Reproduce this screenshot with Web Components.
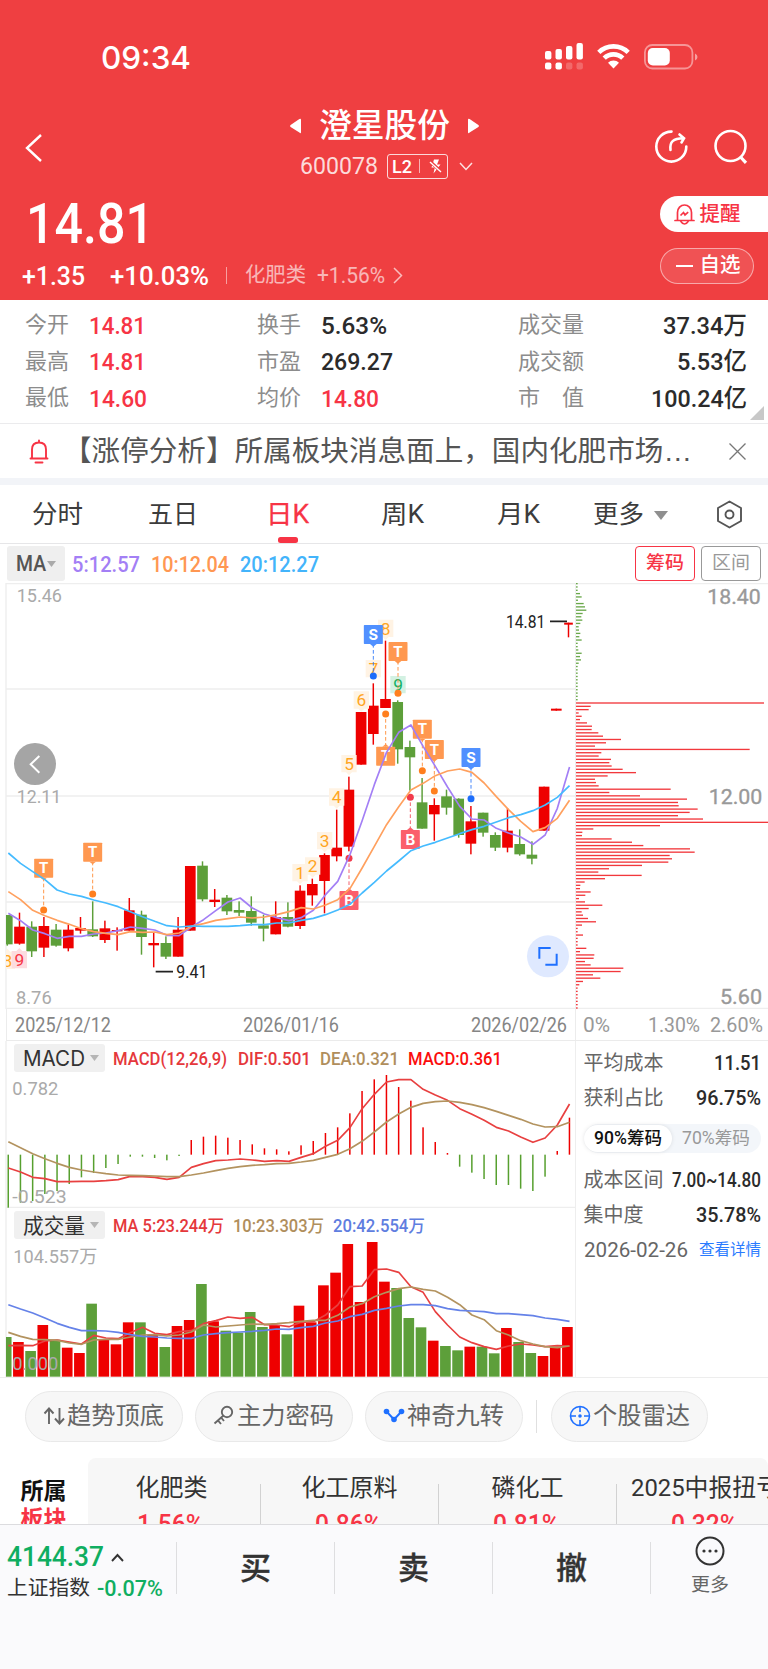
<!DOCTYPE html>
<html lang="zh-CN">
<head>
<meta charset="utf-8">
<title>澄星股份 600078</title>
<style>
    html, body { margin: 0; padding: 0; }
    body {
        width: 768px;
        height: 1669px;
        overflow: hidden;
        background: #fff;
        color: #333;
        font-family: Roboto, "Noto Sans CJK SC", sans-serif;
    }
</style>
</head>
<body>
<stock-app></stock-app>

<script>
const RED = '#ee0000';
const GREEN = '#5d9f3a';

// Text squeezed or stretched to a given width
class FitText extends HTMLElement {
    constructor() {
        super();
        this.attachShadow({ mode: 'open' });
        this.shadowRoot.innerHTML = `
            <style>
                :host { display: inline-block; flex: none; line-height: 1; height: 1em; white-space: nowrap; }
                span { display: inline-block; transform-origin: 0 0; }
            </style>
            <span><slot></slot></span>
        `;
    }

    connectedCallback() {
        const w = Number(this.getAttribute('w'));
        const span = this.shadowRoot.querySelector('span');
        this.style.width = w + 'px';
        const natural = span.getBoundingClientRect().width;
        if (natural > 0) span.style.transform = `scaleX(${w / natural})`;
    }
}
customElements.define('fit-text', FitText);

class StatusBar extends HTMLElement {
    constructor() {
        super();
        this.attachShadow({ mode: 'open' });
        this.shadowRoot.innerHTML = `
            <style>
                :host { display: flex; justify-content: space-between; box-sizing: border-box; height: 100px; padding: 42px 69px 0 101px; color: #fff; }
                fit-text { font: 500 31.5px/1 Inter, sans-serif; }
                .icons { display: flex; gap: 13px; }
            </style>
            <fit-text w="90">09:34</fit-text>
            <div class="icons">
                <svg width="39" height="28" viewBox="0 0 39 28" fill="#fff">
                    <rect x="0" y="9" width="6.4" height="8.5" rx="2"/>
                    <rect x="10.5" y="7" width="6.4" height="10.500" rx="2"/>
                    <rect x="21" y="4" width="6.4" height="13.5" rx="2"/>
                    <rect x="31.5" y="1" width="6.4" height="16.5" rx="2"/>
                    <rect x="0" y="20.5" width="6.4" height="7" rx="2"/>
                    <rect x="10.5" y="20.5" width="6.4" height="7" rx="2"/>
                    <rect x="21" y="20.5" width="6.4" height="7" rx="2" opacity=".22"/>
                    <rect x="31.5" y="20.5" width="6.4" height="7" rx="2" opacity=".22"/>
                </svg>
                <svg width="33" height="28" viewBox="0 0 33 28" fill="none" stroke="#fff" stroke-width="4.6">
                    <path d="M1.8 10.4A21 21 0 0 1 31.2 10.4"/>
                    <path d="M7.2 16.2A13.2 13.2 0 0 1 25.8 16.2"/>
                    <path d="M16.5 26.5L11 20.8A8 8 0 0 1 22 20.8Z" fill="#fff" stroke="none"/>
                </svg>
                <svg width="56" height="28" viewBox="0 0 56 28">
                    <rect x="1.9" y="3" width="47.5" height="23.5" rx="7.5" fill="none" stroke="#fff" stroke-opacity=".45" stroke-width="1.8"/>
                    <rect x="4.8" y="6" width="22" height="17.4" rx="5" fill="#fff"/>
                    <path d="M52 11.5q2.5 1 2.500 3.500t-2.500 3.500z" fill="#fff" opacity=".5"/>
                </svg>
            </div>
        `;
    }
}
customElements.define('status-bar', StatusBar);

class StockTitle extends HTMLElement {
    constructor() {
        super();
        this.attachShadow({ mode: 'open' });
        this.shadowRoot.innerHTML = `
            <style>
                :host { display: grid; grid-template-columns: 240px 1fr 240px; height: 93px; color: #fff; }
                .back { padding: 34px 0 0 25px; }
                .mid { display: flex; flex-direction: column; align-items: center; }
                .name { display: flex; align-items: center; gap: 18px; margin-top: 10px; height: 32px; }
                .name fit-text { font-size: 32.5px; font-weight: 500; }
                .sub { display: flex; align-items: center; margin: 11px 0 0 4px; height: 26px; }
                .code { font-size: 24px; color: rgba(255,255,255,.82); }
                .badge { display: flex; align-items: center; box-sizing: border-box; width: 61px; height: 25px; margin: 0 11px 0 9px; padding: 0 4px; border: 1.4px solid rgba(255,255,255,.8); border-radius: 3px; }
                .badge fit-text { font-size: 19px; font-weight: 500; }
                .badge i { width: 1px; height: 14px; margin: 0 9px 0 7px; background: rgba(255,255,255,.6); }
                .tools { display: flex; justify-content: flex-end; gap: 25px; padding: 29px 20.500px 0 0; }
            </style>
            <div class="back">
                <svg width="18" height="28" viewBox="0 0 18 28" fill="none" stroke="#fff" stroke-width="2.4"><path d="M16 1L2 14L16 27"/></svg>
            </div>
            <div class="mid">
                <div class="name">
                    <svg width="11" height="16" viewBox="0 0 11 16" fill="#fff"><path d="M11 2v12q0 2-1.600.6L.6 9Q-.4 8 .6 7L9.400 1Q11 0 11 2z"/></svg>
                    <fit-text w="131">澄星股份</fit-text>
                    <svg width="11" height="16" viewBox="0 0 11 16" fill="#fff"><path d="M0 2v12q0 2 1.600.6L10.400 9Q11.400 8 10.400 7L1.600 1Q0 0 0 2z"/></svg>
                </div>
                <div class="sub">
                    <fit-text class="code" w="78">600078</fit-text>
                    <div class="badge">
                        <fit-text w="20">L2</fit-text><i></i>
                        <svg width="13" height="15" viewBox="0 0 13 15"><path d="M5 .5H10L8 5.500H11.500L4.500 14.500L5.800 8.500H2.500z" fill="#fff"/><path d="M1 2.500l11 10" stroke="#ef3f41" stroke-width="3.200"/><path d="M1 3l11 10" stroke="#fff" stroke-width="1.400"/></svg>
                    </div>
                    <svg width="14" height="9" viewBox="0 0 14 9" fill="none" stroke="#fff" stroke-opacity=".85" stroke-width="1.500"><path d="M1 1l6 6.500L13 1"/></svg>
                </div>
            </div>
            <div class="tools">
                <svg width="35" height="35" viewBox="0 0 35 35" fill="none" stroke="#fff" stroke-width="2.600">
                    <path d="M17.500 2.600A15 15 0 1 0 32.300 17.500" stroke-linecap="round"/>
                    <path d="M16.500 21C15.500 13 19 9.300 29.500 9.300M25.500 5.500L30 9.300L27.500 13.500" stroke-linecap="round"/>
                </svg>
                <svg width="34" height="35" viewBox="0 0 34 35" fill="none" stroke="#fff" stroke-width="2.600">
                    <circle cx="16.500" cy="17" r="15"/><path d="M26.500 28L32 33.800" stroke-width="3.200"/>
                </svg>
            </div>
        `;
    }
}
customElements.define('stock-title', StockTitle);

class PriceHead extends HTMLElement {
    constructor() {
        super();
        this.attachShadow({ mode: 'open' });
        this.shadowRoot.innerHTML = `
            <style>
                :host { display: flex; justify-content: space-between; height: 107px; color: #fff; }
                .price { display: block; margin: 3px 0 0 25.500px; font-size: 56px; font-weight: 500; }
                .line { display: flex; align-items: center; height: 28px; margin: 9.500px 0 0 21.500px; font-size: 26px; font-weight: 500; }
                .line i { width: 1px; height: 17px; margin: 0 18px 0 17px; background: rgba(255,255,255,.5); }
                .sector { font-size: 20.5px; font-weight: 400; opacity: .62; }
                .sector + .sector { margin: 0 8px 0 11px; font-size: 22px; }
                .side { width: 108.500px; padding-top: 3px; }
                .pill { display: flex; align-items: center; box-sizing: border-box; height: 36px; font-size: 20.5px; font-weight: 500; }
                .remind { padding-left: 14px; gap: 5px; border-radius: 18px 0 0 18px; background: #fff; color: #f73445; }
                .fav { width: 94px; margin-top: 15.500px; padding-left: 15px; gap: 7px; border: 1px solid rgba(255,255,255,.5); border-radius: 18px; background: rgba(255,255,255,.1); }
                .fav i { width: 17px; height: 2px; background: #fff; }
            </style>
            <div>
                <fit-text class="price" w="128">14.81</fit-text>
                <div class="line">
                    <fit-text w="63">+1.35</fit-text>
                    <fit-text w="99" style="margin-left:25px">+10.03%</fit-text>
                    <i></i>
                    <fit-text class="sector" w="61">化肥类</fit-text>
                    <fit-text class="sector" w="68">+1.56%</fit-text>
                    <svg width="10" height="17" viewBox="0 0 10 17" fill="none" stroke="#fff" stroke-opacity=".65" stroke-width="1.500"><path d="M1 1l7.500 7.500L1 16"/></svg>
                </div>
            </div>
            <div class="side">
                <div class="pill remind">
                    <svg width="21" height="21" viewBox="0 0 21 21" fill="none" stroke="#f73445" stroke-width="1.700">
                        <path d="M1 16.500h19M3.500 16.500V8.500a7 7.500 0 0 1 14 0v8" stroke-linecap="round"/>
                        <path d="M6.500 17q4 6 8 0"/>
                        <path d="M6.500 11.500l3-3 1.500 2.500 3.200-2.800"/>
                    </svg>
                    <fit-text w="41">提醒</fit-text>
                </div>
                <div class="pill fav"><i></i><fit-text w="41">自选</fit-text></div>
            </div>
        `;
    }
}
customElements.define('price-head', PriceHead);

class StatItem extends HTMLElement {
    constructor() {
        super();
        this.attachShadow({ mode: 'open' });
    }

    connectedCallback() {
        const label = this.getAttribute('label');
        this.shadowRoot.innerHTML = `
            <style>
                :host { display: flex; align-items: center; height: 36.700px; }
                .label { display: flex; justify-content: space-between; margin-right: 19.500px; color: #8c8c8c; font-size: 22px; line-height: 1; padding-bottom: 1px; }
                :host([wide]) { justify-content: space-between; }
                :host([wide]) .label { width: 66px; margin: 0; }
                fit-text { margin-top: 1px; font-size: 24.500px; font-weight: 500; color: #2b2b2b; }
                :host([up]) fit-text { color: #f73445; }
            </style>
            <div class="label">${label.split(' ').map(t => `<span>${t}</span>`).join('')}</div>
            <fit-text w="${this.getAttribute('w')}">${this.getAttribute('value')}</fit-text>
        `;
    }
}
customElements.define('stat-item', StatItem);

class StatGrid extends HTMLElement {
    constructor() {
        super();
        this.attachShadow({ mode: 'open' });
        this.shadowRoot.innerHTML = `
            <style>
                :host { display: grid; position: relative; grid-template-columns: 232px 261px 229px; box-sizing: border-box; height: 124px; padding: 7px 0 0 25px; border-bottom: 1.500px solid #ebebed; align-content: start; }
                .corner { position: absolute; right: 4px; bottom: 3px; }
            </style>
            <stat-item label="今开" value="14.81" w="57" up></stat-item>
            <stat-item label="换手" value="5.63%" w="66"></stat-item>
            <stat-item label="成交量" value="37.34万" w="84" wide></stat-item>
            <stat-item label="最高" value="14.81" w="57" up></stat-item>
            <stat-item label="市盈" value="269.27" w="72"></stat-item>
            <stat-item label="成交额" value="5.53亿" w="70" wide></stat-item>
            <stat-item label="最低" value="14.60" w="58" up></stat-item>
            <stat-item label="均价" value="14.80" w="58" up></stat-item>
            <stat-item label="市 值" value="100.24亿" w="96" wide></stat-item>
            <svg class="corner" width="14" height="14" fill="#c8c8c8"><path d="M14 0V14H0z"/></svg>
        `;
    }
}
customElements.define('stat-grid', StatGrid);

class NoticeBar extends HTMLElement {
    constructor() {
        super();
        this.attachShadow({ mode: 'open' });
        this.shadowRoot.innerHTML = `
            <style>
                :host { display: flex; align-items: center; box-sizing: border-box; height: 61px; padding: 0 22px 0 29px; border-bottom: 7px solid #f2f4f8; color: #555; }
                fit-text { margin: 1px auto 0 13.500px; font-size: 28.500px; font-family: "Liberation Sans", "Noto Sans CJK SC", sans-serif; }
            </style>
            <svg width="20" height="25" viewBox="0 0 20 25" fill="none" stroke="#f73445" stroke-width="1.900" stroke-linecap="round">
                <path d="M1.500 19.500H18.500M3 19V10.500Q3 3.500 10 3.500T17 10.500V19M10 1.500V3M6.500 23.500H13.500"/>
            </svg>
            <fit-text w="629"><slot></slot></fit-text>
            <svg width="17" height="17" viewBox="0 0 17 17" stroke="#777" stroke-width="1.300"><path d="M.5 .5l16 16M16.500.5l-16 16"/></svg>
        `;
    }
}
customElements.define('notice-bar', NoticeBar);

class PeriodTabs extends HTMLElement {
    constructor() {
        super();
        this.attachShadow({ mode: 'open' });
        this.shadowRoot.innerHTML = `
            <style>
                :host { display: grid; grid-template-columns: repeat(5, 115px) 128px 65px; box-sizing: border-box; height: 59px; border-bottom: 1.500px solid #e6e6e8; color: #3c3c3c; font-size: 25.500px; }
                div { display: flex; flex-direction: column; align-items: center; padding-top: 17px; }
                div i { width: 20px; height: 5.500px; margin-top: 9.500px; border-radius: 2.500px; background: #f73445; }
                .on { color: #f73445; -webkit-text-stroke: .3px #f73445; }
                .more { flex-direction: row; align-items: flex-start; gap: 10px; padding-left: 18px; }
                .more svg { margin-top: 9px; }
                .set { padding: 14.500px 0 0 13px; align-items: flex-start; }
            </style>
            <div><fit-text w="51">分时</fit-text></div>
            <div><fit-text w="50">五日</fit-text></div>
            <div class="on"><fit-text w="43">日K</fit-text><i></i></div>
            <div><fit-text w="43">周K</fit-text></div>
            <div style="padding-left:2px"><fit-text w="43">月K</fit-text></div>
            <div class="more"><fit-text w="51">更多</fit-text><svg width="14" height="9" fill="#8f8f8f"><path d="M0 0H14L7 9z"/></svg></div>
            <div class="set">
                <svg width="27" height="29" viewBox="0 0 27 29" fill="none" stroke="#555" stroke-width="1.900" stroke-linejoin="round">
                    <path d="M13.500 1.500L25 8V21L13.500 27.500L2 21V8z"/><circle cx="13.500" cy="14.500" r="4"/>
                </svg>
            </div>
        `;
    }
}
customElements.define('period-tabs', PeriodTabs);

class MaRow extends HTMLElement {
    constructor() {
        super();
        this.attachShadow({ mode: 'open' });
        this.shadowRoot.innerHTML = `
            <style>
                :host { display: flex; align-items: flex-start; box-sizing: border-box; height: 39px; padding: 2px 7px 0 7px; font-size: 21.500px; font-weight: 500; }
                .sel { display: flex; align-items: center; gap: 1px; box-sizing: border-box; width: 58px; height: 35px; padding-left: 9px; margin-right: 7px; background: #efefef; border-radius: 3px; color: #555; }
                .v { margin: 7.500px 11px 0 0; }
                .btn { display: flex; align-items: center; justify-content: center; box-sizing: border-box; width: 60px; height: 35px; border: 1.500px solid; border-radius: 4px; font-size: 18.500px; }
            </style>
            <div class="sel"><fit-text w="30">MA</fit-text><svg width="9" height="6" fill="#aaa"><path d="M0 0H9L4.500 6z"/></svg></div>
            <fit-text class="v" w="68" style="color:#a37ff5">5:12.57</fit-text>
            <fit-text class="v" w="78" style="color:#ff9752">10:12.04</fit-text>
            <fit-text class="v" w="79" style="color:#43b4fb">20:12.27</fit-text>
            <div class="btn" style="color:#f73445;margin-left:auto;margin-right:6px"><fit-text w="38">筹码</fit-text></div>
            <div class="btn" style="color:#999;font-weight:400"><fit-text w="38">区间</fit-text></div>
        `;
    }
}
customElements.define('ma-row', MaRow);

// All charts below draw in thirds of a pixel; one trading day is 36.6 units wide
const DAY = 36.6;
const line = (ys, color) => `<polyline fill="none" stroke="${color}" stroke-width="5" stroke-linejoin="round" points="${ys.map((y, i) => (25 + i * DAY).toFixed(1) + ',' + y).join(' ')}"/>`;
const label = (x, y, w, size, text, color) => `<text x="${x}" y="${y}" textLength="${w}" lengthAdjust="spacingAndGlyphs" font-size="${size}" fill="${color}">${text}</text>`;

// [color, body top, body bottom, high, low]
const CANDLES = [
    ['g',1036,1124,1036,1128],['r',1071,1122,1029,1125],['g',1071,1145,1055,1162],['r',1069,1134,1042,1162],
    ['g',1080,1128,1063,1131],['r',1080,1136,1066,1145],['r',1075,1083,1042,1092],['g',1079,1100,995,1102],
    ['r',1076,1111,1053,1120],['r',1081,1085,1073,1143],['r',1022,1083,985,1083],['g',1035,1102,1023,1155],
    ['r',1120,1127,1088,1193],['g',1120,1161,1100,1168],['r',1080,1161,1042,1161],['r',889,1083,889,1083],
    ['g',888,989,875,995],['r',990,997,958,1012],['g',984,1025,976,1036],['g',1021,1029,995,1039],
    ['g',1024,1059,980,1068],['g',1067,1077,1035,1115],['r',1042,1094,995,1094],['g',1042,1071,998,1073],
    ['r',963,1069,947,1078],['r',943,977,927,1008],['r',856,934,851,1031],['r',834,860,720,875],
    ['r',660,831,621,845],['r',427,585,427,585],['r',408,493,341,525],['r',388,415,213,415],
    ['g',397,539,392,582],['g',532,563,513,663],['g',698,777,625,777],['r',706,734,686,813],
    ['g',680,714,660,735],['g',687,796,686,804],['r',755,822,709,854],['g',729,789,729,801],
    ['g',796,834,788,844],['r',783,834,716,848],['g',823,854,779,858],['g',855,867,815,884],
    ['r',651,783,651,783],['r',417,423,417,423],['r',159,165,159,203]
];
const MA5 = [1031,1053,1081,1092,1106,1100,1100,1093,1090,1083,1072,1076,1081,1097,1098,1072,1050,1023,997,985,1015,1033,1044,1053,1044,1022,975,935,855,753,645,548,488,466,530,590,652,710,748,751,776,790,802,824,796,716,592];
const MA10 = [966,990,1022,1038,1052,1064,1077,1086,1091,1095,1086,1088,1087,1095,1090,1070,1062,1052,1047,1042,1045,1042,1035,1026,1014,1018,1006,990,957,895,830,765,711,661,641,618,604,598,608,640,681,720,755,786,774,746,692];
const MA20 = [850,881,906,930,961,973,980,991,1000,1011,1026,1041,1055,1068,1072,1069,1070,1070,1070,1068,1065,1065,1060,1060,1052,1046,1035,1021,1004,970,938,904,874,843,829,818,805,792,780,770,757,744,735,723,706,683,648];

// nine-turn counters: [x, middle, digit, fill, background, tip: 1 down / -1 up]
const TURNS = [
    [22,1172,8,'#ffa51f','#fff3e4',-1],[58,1170,9,'#f73445','#fddcdf',-1],
    [900,909,1,'#ffa51f','#fff3e4',1],[938,889,2,'#ffa51f','#fff3e4',1],[974,813,3,'#ffa51f','#fff3e4',1],
    [1010,682,4,'#ffa51f','#fff3e4',1],[1047,582,5,'#ffa51f','#fff3e4',1],[1084,391,6,'#ffa51f','#fff3e4',1],
    [1120,297,7,'#ffa51f','#fff3e4',1],[1157,176,8,'#ffa51f','#fff3e4',1],[1194,345,9,'#12b268','#d3f1e2',1]
];
// trade tags: [x, box top, dot y, letter]
const TAGS = [
    [131,867,1021,'T'],[278,819,973,'T'],[1120,166,319,'S'],[1194,217,371,'T'],[1157,531,433,'T'],
    [1267,450,603,'T'],[1303,511,664,'T'],[1413,535,687,'S'],[1231,781,683,'B'],[1047,964,866,'B']
];
const TAG_COLORS = { T: ['#ff9850', '#ff7f1e'], S: ['#5090ff', '#1d6dfb'], B: ['#fb5f6b', '#f23a4b'] };

class KChart extends HTMLElement {
    constructor() {
        super();
        this.attachShadow({ mode: 'open' });
        this.shadowRoot.innerHTML = `
            <style>
                :host { display: block; height: 426px; }
                svg { display: block; font-family: Roboto, sans-serif; }
            </style>
            <svg width="576" height="426" viewBox="0 40 1728 1278">${this.draw()}</svg>
        `;
    }

    candles() {
        return CANDLES.map(([c, top, bottom, high, low], i) => {
            const x = 21.9 + i * DAY;
            const w = i === 46 ? 13 : 16;
            const left = Math.max(x - w, 18);
            const fill = c === 'r' ? RED : GREEN;
            return `<rect x="${left}" y="${top}" width="${x + w - left}" height="${bottom - top}" fill="${fill}"/>
                <rect x="${x - 2.2}" y="${high}" width="4.4" height="${low - high}" fill="${fill}"/>`;
        }).join('');
    }

    turns() {
        return TURNS.map(([x, y, n, fill, bg, tip]) => `
            <path d="M${x - 23} ${y - 26}H${x + 23}V${y + 26}H${x - 23}z M${x - 9} ${y + tip * 26}h18l-9 ${tip * 9}z" fill="${bg}"/>
            <text x="${x}" y="${y + 19}" font-size="52" text-anchor="middle" fill="${fill}">${n}</text>`).join('');
    }

    tags() {
        return TAGS.map(([x, top, dot, letter]) => {
            const [box, dark] = TAG_COLORS[letter];
            const below = dot > top;
            const edge = below ? top + 57 : top;
            return `<path d="M${x} ${edge}V${dot}" stroke="${dark}" stroke-width="3" stroke-dasharray="11 7" opacity=".8"/>
                <circle cx="${x}" cy="${dot}" r="10.500" fill="${dark}"/>
                <rect x="${x - 28.5}" y="${top}" width="57" height="57" rx="2" fill="${box}"/>
                <path d="M${x - 10} ${edge}h20l-10 ${below ? 8 : -8}z" fill="${box}"/>
                <text x="${x}" y="${top + 44}" font-family="Inter" font-weight="700" font-size="44" text-anchor="middle" fill="#fff">${letter}</text>`;
        }).join('');
    }

    draw() {
        return `
            <clipPath id="plot"><rect x="18" y="40" width="1710" height="1278"/></clipPath>
            <path d="M18 42H1728M18 358H1728M18 679H1728M18 997H1728M18 1316H1728" stroke="#eeeeee" stroke-width="4"/>
            <path d="M18 40V1318M1727 40V1318" stroke="#eeeeee" stroke-width="4"/>
            ${label(50, 98, 136, 57, '15.46', '#aaa')}
            ${label(50, 701, 134, 57, '12.11', '#aaa')}
            ${label(48, 1303, 107, 57, '8.76', '#aaa')}
            ${this.candles()}
            <g clip-path="url(#plot)">${this.turns()}</g>
            ${this.tags()}
            ${line(MA5, '#a37ff5')}
            ${line(MA10, '#ffa05e')}
            ${line(MA20, '#45bbff')}
            <path d="M467 1206H519M1650 155H1701" stroke="#222" stroke-width="5"/>
            ${label(529, 1226, 93, 53, '9.41', '#222')}
            ${label(1518, 176, 118, 53, '14.81', '#222')}
            <circle cx="105" cy="583" r="63" fill="#a5a5a5"/>
            <path d="M118 559L92 584L118 609" fill="none" stroke="#fff" stroke-width="6"/>
            <circle cx="1644" cy="1160" r="63" fill="#dfe9ff"/>
            <path d="M1618 1167V1135H1652M1636 1185H1670V1152" fill="none" stroke="#1f70ff" stroke-width="6"/>
        `;
    }
}
customElements.define('k-chart', KChart);

const CHIPS = [
    5,5,5,12,17,6,23,27,31,20,16,19,13,8,9,13,10,17,5,5,7,17,12,15,8,5,5,5,5,5,5,5,5,5,5,5,
    564,44,38,8,17,12,33,48,47,67,81,135,90,57,521,76,68,105,100,107,140,180,95,57,60,68,284,100,192,333,306,308,365,341,306,381,576,
    252,52,19,18,107,168,202,342,356,281,288,277,198,99,67,197,87,26,13,12,44,28,9,27,79,38,17,21,36,60,18,5,5,21,5,5,5,31,12,55,53,27,44,142,134,51,73,21,10,
    5,5,5,5,5,5,5
];

class ChipChart extends HTMLElement {
    constructor() {
        super();
        this.attachShadow({ mode: 'open' });
        const bars = CHIPS.map((w, i) => `<rect x="0" y="${(40 + i * 9.945).toFixed(1)}" width="${w}" height="4" fill="${i < 36 ? '#6aa84b' : '#f2383c'}"/>`).join('');
        this.shadowRoot.innerHTML = `
            <style>
                :host { display: block; height: 426px; }
                svg { display: block; font-family: Roboto, sans-serif; }
            </style>
            <svg width="192" height="426" viewBox="0 40 576 1278">
                <path d="M0 42H576M0 1316H576" stroke="#eeeeee" stroke-width="4"/>
                ${bars}
                <g stroke="#999" stroke-width="1">
                    ${label(394, 102, 160, 61, '18.40', '#999')}
                    ${label(398, 704, 161, 61, '12.00', '#999')}
                    ${label(432, 1304, 126, 61, '5.60', '#999')}
                </g>
            </svg>
        `;
    }
}
customElements.define('chip-chart', ChipChart);

class DateAxis extends HTMLElement {
    constructor() {
        super();
        this.attachShadow({ mode: 'open' });
        this.shadowRoot.innerHTML = `
            <style>
                :host { display: grid; grid-template-columns: 576px 192px; box-sizing: border-box; height: 32px; margin-left: 6px; border-bottom: 1.500px solid #ebebeb; color: #858585; font-size: 19.500px; }
                div { display: flex; justify-content: space-between; box-sizing: border-box; padding: 6.500px 8px 0; }
                .dates { width: 570px; border: solid #ececec; border-width: 0 1.500px; }
                .scale { margin-left: -6px; padding: 6.500px 11px 0 7px; color: #999; }
            </style>
            <div class="dates">
                <fit-text w="96">2025/12/12</fit-text><fit-text w="96">2026/01/16</fit-text><fit-text w="96">2026/02/26</fit-text>
            </div>
            <div class="scale">
                <fit-text w="27" style="margin-right:27px">0%</fit-text><fit-text w="52">1.30%</fit-text><fit-text w="53">2.60%</fit-text>
            </div>
        `;
    }
}
customElements.define('date-axis', DateAxis);

// Sub chart frame: selector, legend items and the drawing in slots
class SubChart extends HTMLElement {
    constructor() {
        super();
        this.attachShadow({ mode: 'open' });
    }

    connectedCallback() {
        this.shadowRoot.innerHTML = `
            <style>
                :host { display: grid; box-sizing: border-box; width: 576px; }
                .head, .plot { grid-area: 1 / 1; }
                .head { display: flex; align-items: flex-start; padding: 3px 0 0 14px; z-index: 1; height: 28px; }
                .sel { display: flex; align-items: center; justify-content: space-between; box-sizing: border-box; width: 91px; height: 28px; padding: 0 6px 0 9px; margin-right: 8px; border-radius: 3px; background: #f0f0f0; color: #333; font: 21px Inter, "Noto Sans CJK SC", sans-serif; }
                .legend { display: flex; padding-top: 7px; font-size: 17.500px; font-weight: 500; white-space: pre; }
            </style>
            <div class="head">
                <div class="sel"><fit-text w="${this.getAttribute('w')}">${this.getAttribute('name')}</fit-text><svg width="9" height="6" fill="#b5b5b5"><path d="M0 0H9L4.500 6z"/></svg></div>
                <div class="legend"><slot name="legend"></slot></div>
            </div>
            <div class="plot"><slot></slot></div>
        `;
    }
}
customElements.define('sub-chart', SubChart);

const MACD_BARS = [593,578,573,552,543,522,502,489,474,462,440,440,444,451,438,390,380,377,383,390,403,415,418,424,406,393,369,352,310,243,208,195,231,272,352,396,429,470,488,507,525,525,536,543,500,423,323];
const DIF = [474,486,502,506,515,515,514,514,512,509,499,500,502,508,502,472,461,452,450,447,450,454,452,454,442,431,409,391,353,296,253,216,209,209,238,255,271,296,313,331,352,363,381,397,384,345,282];
const DEA = [395,413,431,446,460,472,480,486,491,495,496,497,498,500,500,495,489,482,475,470,466,464,461,460,456,451,442,433,416,394,366,336,312,292,280,275,273,277,284,293,304,316,328,342,351,350,337];

class MacdChart extends HTMLElement {
    constructor() {
        super();
        this.attachShadow({ mode: 'open' });
        const bars = MACD_BARS.map((y, i) => {
            const x = 22.5 + i * DAY;
            return `<rect x="${x}" y="${Math.min(y, 434)}" width="4.500" height="${Math.abs(y - 434)}" fill="${y < 434 ? RED : '#57a02f'}"/>`;
        }).join('');
        this.shadowRoot.innerHTML = `
            <style>
                :host { display: block; height: 167px; }
                svg { display: block; font-family: Roboto, sans-serif; }
                sub-chart fit-text { margin-right: 9px; }
            </style>
            <sub-chart name="MACD" w="62">
                <fit-text slot="legend" w="114" style="color:#e5383c;margin-right:11px">MACD(12,26,9)</fit-text>
                <fit-text slot="legend" w="73" style="color:#e5383c">DIF:0.501</fit-text>
                <fit-text slot="legend" w="79" style="color:#b08e5c">DEA:0.321</fit-text>
                <fit-text slot="legend" w="94" style="color:#fb0d0d">MACD:0.361</fit-text>
                <svg width="576" height="167" viewBox="0 93 1728 501">
                    <path d="M18 93V594M1727 93V594M18 592H1728" stroke="#eeeeee" stroke-width="4"/>
                    ${bars}
                    ${line(DIF, '#e84040')}
                    ${line(DEA, '#b3935f')}
                    ${label(37, 255, 138, 56, '0.782', '#aaa')}
                    ${label(37, 578, 163, 56, '-0.523', '#aaa')}
                </svg>
            </sub-chart>
        `;
    }
}
customElements.define('macd-chart', MacdChart);

const VOL_COLORS = 'grgrgrrgrrrgrgrrgrgggg' + 'rgrrrrrrrrgggrggrggrggrrr';
const VOL_TOPS = [981,996,1023,945,989,1013,1029,881,990,1003,937,937,975,1011,948,930,822,934,962,968,906,951,945,973,887,937,826,788,702,876,696,815,834,924,952,992,1008,1021,1010,1010,1030,954,996,1029,1038,1010,951];
const VOL5 = [1007,1006,1007,993,990,996,1002,976,984,986,968,952,970,974,965,962,941,932,921,925,922,944,945,950,937,935,915,885,830,828,779,777,787,830,847,905,945,981,998,1010,1018,1008,1002,1005,1010,1007,1008];
const VOL10 = [967,979,988,989,991,999,1003,990,988,988,981,975,974,978,975,966,945,951,948,945,942,943,941,938,934,931,931,916,891,881,860,847,836,831,838,843,862,884,915,929,962,975,992,1002,1010,1013,1008];
const VOL20 = [884,897,909,924,940,952,962,962,963,967,974,979,981,984,985,985,975,971,968,966,964,961,957,958,953,949,939,933,920,913,901,895,888,884,884,887,896,901,903,905,911,911,914,917,924,928,934];

class VolChart extends HTMLElement {
    constructor() {
        super();
        this.attachShadow({ mode: 'open' });
        const bars = VOL_TOPS.map((y, i) => {
            const x = Math.max(2.6 + i * DAY, 18);
            const right = 2.6 + i * DAY + 32;
            return `<rect x="${x}" y="${y}" width="${right - x}" height="${1100 - y}" fill="${VOL_COLORS[i] === 'r' ? RED : GREEN}"/>`;
        }).join('');
        this.shadowRoot.innerHTML = `
            <style>
                :host { display: block; height: 169px; }
                svg { display: block; font-family: Roboto, "Noto Sans CJK SC", sans-serif; }
                sub-chart fit-text { margin-right: 9px; }
            </style>
            <sub-chart name="成交量" w="62">
                <fit-text slot="legend" w="111" style="color:#e5383c">MA 5:23.244万</fit-text>
                <fit-text slot="legend" w="91" style="color:#b08e5c">10:23.303万</fit-text>
                <fit-text slot="legend" w="92" style="color:#5f7ee0">20:42.554万</fit-text>
                <svg width="576" height="169" viewBox="0 594 1728 507">
                    <path d="M18 594V1101M1727 594V1101" stroke="#eeeeee" stroke-width="4"/>
                    ${bars}
                    ${line(VOL5, '#e84040')}
                    ${line(VOL10, '#b3935f')}
                    ${line(VOL20, '#6582e8')}
                    ${label(40, 758, 252, 56, '104.557万', '#aaa')}
                    ${label(37, 1081, 138, 56, '0.000', '#aaa')}
                </svg>
            </sub-chart>
        `;
    }
}
customElements.define('vol-chart', VolChart);

class ChipInfo extends HTMLElement {
    constructor() {
        super();
        this.attachShadow({ mode: 'open' });
        this.shadowRoot.innerHTML = `
            <style>
                :host { display: block; box-sizing: border-box; padding: 4px 7.500px 0; color: #666; font-size: 20px; }
                .row { display: flex; align-items: center; justify-content: space-between; height: 35px; }
                .row b { font-weight: 500; font-size: 20.500px; color: #2b2b2b; }
                .row:last-child { height: 37px; }
                .seg { display: flex; align-items: center; height: 29px; margin: 9px 0; border-radius: 15px; background: #f3f6fa; font-size: 17.500px; color: #999; }
                .on { display: flex; align-items: center; justify-content: center; box-sizing: border-box; width: 88px; height: 27px; margin: 0 10px 0 .5px; border-radius: 14px; background: #fff; box-shadow: 0 0 4px rgba(0,0,0,.1); color: #111; font-weight: 500; }
                .date { font-size: 20.500px; }
                .link { font-size: 15.500px; color: #2a7bff; }
            </style>
            <div class="row"><fit-text w="80">平均成本</fit-text><b><fit-text w="47">11.51</fit-text></b></div>
            <div class="row"><fit-text w="80">获利占比</fit-text><b><fit-text w="65">96.75%</fit-text></b></div>
            <div class="seg"><div class="on"><fit-text w="68">90%筹码</fit-text></div><fit-text w="68">70%筹码</fit-text></div>
            <div class="row"><fit-text w="80">成本区间</fit-text><b><fit-text w="89">7.00~14.80</fit-text></b></div>
            <div class="row"><fit-text w="60">集中度</fit-text><b><fit-text w="65">35.78%</fit-text></b></div>
            <div class="row"><fit-text class="date" w="104">2026-02-26</fit-text><fit-text class="link" w="62">查看详情</fit-text></div>
        `;
    }
}
customElements.define('chip-info', ChipInfo);

class ToolPill extends HTMLElement {
    constructor() {
        super();
        this.attachShadow({ mode: 'open' });
        this.shadowRoot.innerHTML = `
            <style>
                :host { display: flex; align-items: center; justify-content: center; gap: 2px; box-sizing: border-box; width: 157.500px; height: 51px; border: 1.500px solid #e9e9e9; border-radius: 26px; background: #f7f7f7; color: #666; font-size: 24.200px; }
            </style>
            <slot name="icon"></slot>
            <fit-text w="97"><slot></slot></fit-text>
        `;
    }
}
customElements.define('tool-pill', ToolPill);

class ToolRow extends HTMLElement {
    constructor() {
        super();
        this.attachShadow({ mode: 'open' });
        this.shadowRoot.innerHTML = `
            <style>
                :host { display: flex; box-sizing: border-box; height: 81px; padding: 12.500px 0 0 25px; gap: 12.500px; border-top: 1.500px solid #ededed; }
                i { width: 1px; height: 33px; margin: 9px 1px 0; background: #e0e0e0; }
            </style>
            <tool-pill>
                <svg slot="icon" width="22" height="22" viewBox="0 0 22 22" fill="none" stroke="#666" stroke-width="1.900"><path d="M6 19V4M1.500 8.500L6 3.500L10.500 8.500M16.500 3V18M12 13.500L16.500 18.500L21 13.500"/></svg>
                趋势顶底
            </tool-pill>
            <tool-pill>
                <svg slot="icon" width="22" height="22" viewBox="0 0 22 22" fill="none" stroke="#666" stroke-width="1.900"><circle cx="14" cy="7" r="5.200"/><path d="M10.500 10.500L1.500 18.500M5 15.500L8 19M8.500 13L11 16"/></svg>
                主力密码
            </tool-pill>
            <tool-pill>
                <svg slot="icon" width="22" height="22" viewBox="0 0 22 22" fill="#1f70ff"><circle cx="3.500" cy="6.500" r="2.800"/><circle cx="18.500" cy="6.500" r="2.800"/><circle cx="11" cy="14.500" r="2.800"/><path d="M3.500 6.500L11 14.500L18.500 6.500" fill="none" stroke="#1f70ff" stroke-width="2"/></svg>
                神奇九转
            </tool-pill>
            <i></i>
            <tool-pill>
                <svg slot="icon" width="22" height="22" viewBox="0 0 22 22" fill="none" stroke="#1f70ff" stroke-width="1.600"><circle cx="11" cy="11" r="9.500"/><circle cx="11" cy="11" r="1" fill="#1f70ff"/><path d="M11 1.500V7M11 15V20.500M1.500 11H7M15 11H20.500"/></svg>
                个股雷达
            </tool-pill>
        `;
    }
}
customElements.define('tool-row', ToolRow);

class BoardItem extends HTMLElement {
    constructor() {
        super();
        this.attachShadow({ mode: 'open' });
    }

    connectedCallback() {
        this.shadowRoot.innerHTML = `
            <style>
                :host { display: flex; flex: none; flex-direction: column; align-items: center; box-sizing: border-box; width: 178px; padding-top: 18px; color: #333; font-size: 24px; }
                .rate { margin: 11.500px 2px 0 0; color: #f73445; font-size: 25px; font-weight: 500; }
            </style>
            <fit-text w="${this.getAttribute('w')}"><slot></slot></fit-text>
            <fit-text class="rate" w="67">${this.getAttribute('rate')}</fit-text>
        `;
    }
}
customElements.define('board-item', BoardItem);

class BoardStrip extends HTMLElement {
    constructor() {
        super();
        this.attachShadow({ mode: 'open' });
        this.shadowRoot.innerHTML = `
            <style>
                :host { display: flex; height: 65.500px; overflow: hidden; }
                .cap { display: flex; flex: none; flex-direction: column; gap: 5.500px; box-sizing: border-box; width: 88px; padding: 21.500px 0 0 20.500px; font-size: 23px; font-weight: 700; color: #111; }
                .cap fit-text + fit-text { color: #f73445; }
                .list { display: flex; flex: none; width: 680px; box-sizing: border-box; overflow: hidden; border-radius: 8px 8px 0 0; background: #f7f7f7; }
                board-item:first-child { margin-left: -5.500px; }
                i { flex: none; width: 1px; height: 60px; margin: 26px 0 0 -1px; background: #d2d2d2; }
            </style>
            <div class="cap"><fit-text w="46">所属</fit-text><fit-text w="46">板块</fit-text></div>
            <div class="list">
                <board-item w="72" rate="1.56%">化肥类</board-item><i></i>
                <board-item w="96" rate="0.86%">化工原料</board-item><i></i>
                <board-item w="72" rate="0.81%">磷化工</board-item><i></i>
                <board-item w="149" rate="0.32%">2025中报扭亏</board-item>
            </div>
        `;
    }
}
customElements.define('board-strip', BoardStrip);

class TradeBar extends HTMLElement {
    constructor() {
        super();
        this.attachShadow({ mode: 'open' });
        this.shadowRoot.innerHTML = `
            <style>
                :host { display: grid; grid-template-columns: 176px repeat(3, 158px) 118px; box-sizing: border-box; height: 147px; border-top: 1.500px solid #dcdcdf; background: #fafafc; color: #333; align-items: start; }
                .index { padding: 19px 0 0 7px; }
                .index div { display: flex; align-items: center; height: 28px; }
                .index .name { margin-top: 5px; height: 24px; font-size: 20.500px; gap: 7px; }
                .num { font-size: 28.500px; font-weight: 500; margin-right: 7px; }
                .green { color: #0fae61; }
                .act { display: flex; justify-content: center; height: 52px; margin-top: 17px; padding-top: 11px; box-sizing: border-box; border-left: 1px solid #dedee0; font-size: 31px; font-weight: 500; -webkit-text-stroke: .35px #333; }
                .more { display: flex; flex-direction: column; align-items: center; height: 52px; margin-top: 17px; border-left: 1px solid #dedee0; font-size: 18.500px; color: #666; }
                .more svg { margin: -6px 0 10px; flex: none; }
            </style>
            <div class="index">
                <div><fit-text class="num green" w="97">4144.37</fit-text><svg width="13" height="9" viewBox="0 0 13 9" fill="none" stroke="#333" stroke-width="1.900"><path d="M1 8l5.500-6L12 8"/></svg></div>
                <div class="name"><fit-text w="83">上证指数</fit-text><fit-text class="green" w="66" style="font-size:22px;font-weight:500">-0.07%</fit-text></div>
            </div>
            <div class="act"><fit-text w="31">买</fit-text></div>
            <div class="act"><fit-text w="31">卖</fit-text></div>
            <div class="act"><fit-text w="31">撤</fit-text></div>
            <div class="more">
                <svg width="30" height="30" viewBox="0 0 30 30"><circle cx="15" cy="15" r="13.500" fill="none" stroke="#333" stroke-width="2"/><g fill="#333"><circle cx="9" cy="15" r="1.600"/><circle cx="15" cy="15" r="1.600"/><circle cx="21" cy="15" r="1.600"/></g></svg>
                <fit-text w="38">更多</fit-text>
            </div>
        `;
    }
}
customElements.define('trade-bar', TradeBar);

class StockApp extends HTMLElement {
    constructor() {
        super();
        this.attachShadow({ mode: 'open' });
        this.shadowRoot.innerHTML = `
            <style>
                :host { display: block; width: 768px; height: 1669px; overflow: hidden; }
                header { background: #ef3f41; }
                .charts { display: grid; grid-template-columns: 576px 192px; }
            </style>
            <header>
                <status-bar></status-bar>
                <stock-title></stock-title>
                <price-head></price-head>
            </header>
            <stat-grid></stat-grid>
            <notice-bar>【涨停分析】所属板块消息面上，国内化肥市场…</notice-bar>
            <period-tabs></period-tabs>
            <ma-row></ma-row>
            <div class="charts"><k-chart></k-chart><chip-chart></chip-chart></div>
            <date-axis></date-axis>
            <div class="charts">
                <div><macd-chart></macd-chart><vol-chart></vol-chart></div>
                <chip-info></chip-info>
            </div>
            <tool-row></tool-row>
            <board-strip></board-strip>
            <trade-bar></trade-bar>
        `;
    }
}
customElements.define('stock-app', StockApp);
</script>
</body>
</html>
